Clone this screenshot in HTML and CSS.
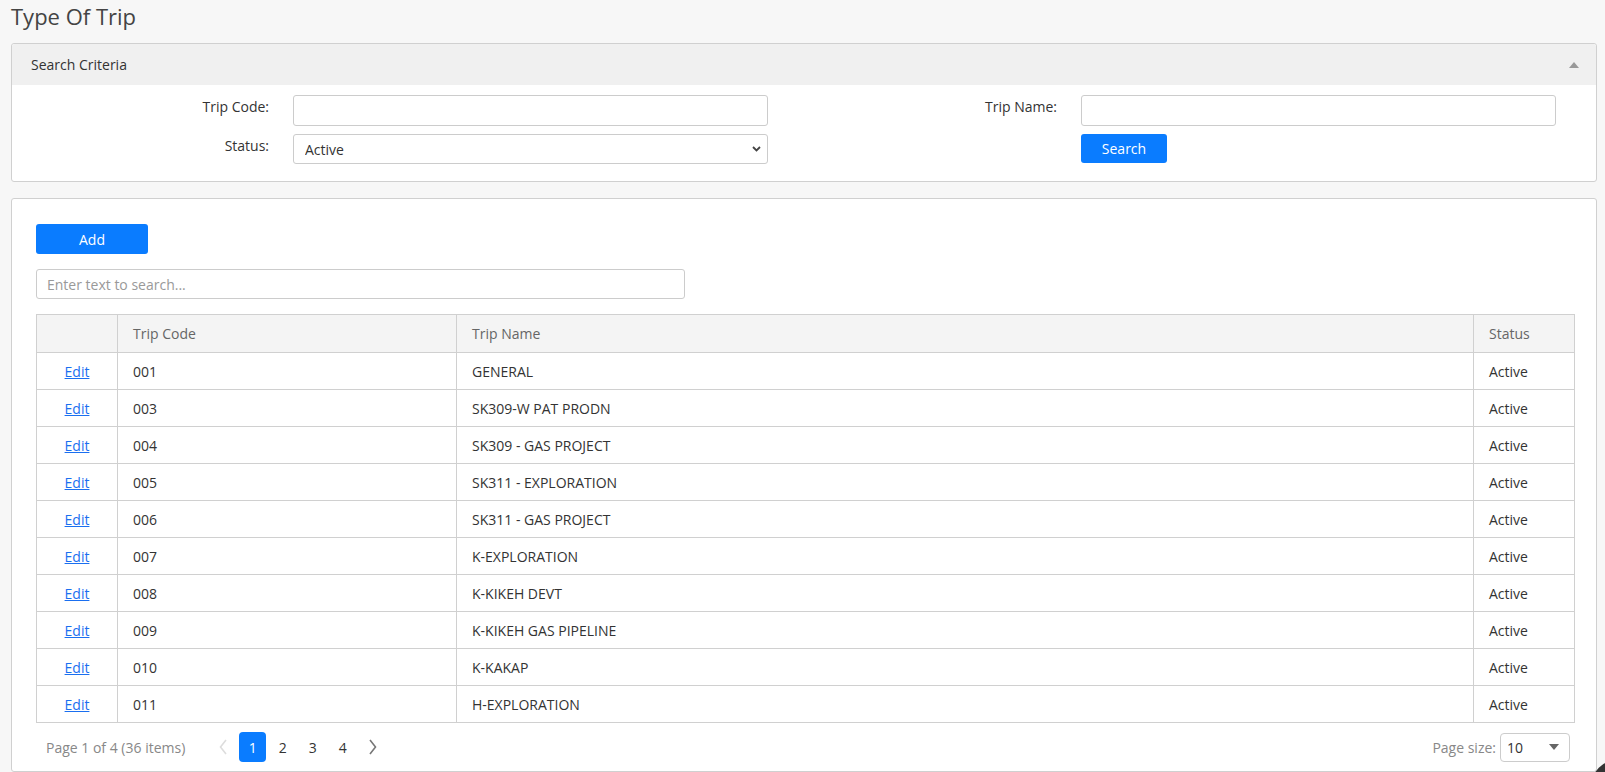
FILE: index.html
```html
<!DOCTYPE html>
<html lang="en">
<head>
<meta charset="utf-8">
<title>Type Of Trip</title>
<link rel="stylesheet" href="styles.css">
</head>
<body>
<h1 class="page-title">Type Of Trip</h1>

<section class="panel criteria">
  <div class="panel-header">
    <span>Search Criteria</span>
    <svg class="collapse-icon" width="10" height="6" viewBox="0 0 10 6"><polygon points="0,6 5,0 10,6" fill="#999"/></svg>
  </div>
  <div class="criteria-body">
    <label class="field-label">Trip Code:</label>
    <input class="text-input" type="text">
    <label class="field-label">Trip Name:</label>
    <input class="text-input" type="text">
    <label class="field-label">Status:</label>
    <div class="select-wrap">
      <select class="select-input"><option>Active</option></select>
      <svg class="select-chevron" width="9" height="6" viewBox="0 0 9 6"><polyline points="1,1 4.5,4.5 8,1" fill="none" stroke="#444" stroke-width="1.8"/></svg>
    </div>
    <span></span>
    <div><button class="btn btn-search" type="button">Search</button></div>
  </div>
</section>

<section class="panel grid-panel">
  <button class="btn btn-add" type="button">Add</button>
  <input class="text-input grid-search" type="text" placeholder="Enter text to search...">
  <table class="grid">
    <colgroup>
      <col class="col-cmd"><col class="col-code"><col class="col-name"><col class="col-status">
    </colgroup>
    <thead>
      <tr><th></th><th>Trip Code</th><th>Trip Name</th><th>Status</th></tr>
    </thead>
    <tbody>
      <tr><td class="cmd"><a href="#">Edit</a></td><td>001</td><td>GENERAL</td><td>Active</td></tr>
      <tr><td class="cmd"><a href="#">Edit</a></td><td>003</td><td>SK309-W PAT PRODN</td><td>Active</td></tr>
      <tr><td class="cmd"><a href="#">Edit</a></td><td>004</td><td>SK309 - GAS PROJECT</td><td>Active</td></tr>
      <tr><td class="cmd"><a href="#">Edit</a></td><td>005</td><td>SK311 - EXPLORATION</td><td>Active</td></tr>
      <tr><td class="cmd"><a href="#">Edit</a></td><td>006</td><td>SK311 - GAS PROJECT</td><td>Active</td></tr>
      <tr><td class="cmd"><a href="#">Edit</a></td><td>007</td><td>K-EXPLORATION</td><td>Active</td></tr>
      <tr><td class="cmd"><a href="#">Edit</a></td><td>008</td><td>K-KIKEH DEVT</td><td>Active</td></tr>
      <tr><td class="cmd"><a href="#">Edit</a></td><td>009</td><td>K-KIKEH GAS PIPELINE</td><td>Active</td></tr>
      <tr><td class="cmd"><a href="#">Edit</a></td><td>010</td><td>K-KAKAP</td><td>Active</td></tr>
      <tr><td class="cmd"><a href="#">Edit</a></td><td>011</td><td>H-EXPLORATION</td><td>Active</td></tr>
    </tbody>
  </table>
  <div class="pager">
    <span class="pager-summary">Page 1 of 4 (36 items)</span>
    <nav class="pager-nav">
      <span class="pg-arrow disabled"><svg width="8" height="16" viewBox="0 0 8 16"><polyline points="7,1 1.5,8 7,15" fill="none" stroke="#ddd" stroke-width="1.6"/></svg></span>
      <span class="pg-num active">1</span>
      <span class="pg-num">2</span>
      <span class="pg-num">3</span>
      <span class="pg-num">4</span>
      <span class="pg-arrow"><svg width="8" height="16" viewBox="0 0 8 16"><polyline points="1,1 6.5,8 1,15" fill="none" stroke="#777" stroke-width="1.6"/></svg></span>
    </nav>
    <span class="pager-spacer"></span>
    <span class="page-size-label">Page size:</span>
    <div class="page-size">
      <span>10</span>
      <svg width="10" height="6" viewBox="0 0 10 6"><polygon points="0,0 10,0 5,6" fill="#666"/></svg>
    </div>
  </div>
</section>

<div class="float-btn"></div>
</body>
</html>
```

FILE: styles.css
```css
html, body {
  margin: 0;
  padding: 0;
}
body {
  background: #f7f7f7;
  font-family: "Open Sans", "Noto Sans", sans-serif;
  font-size: 14px;
  color: #333;
  padding: 0 8px 0 11px;
  overflow: hidden;
  height: 772px;
  box-sizing: border-box;
}
.page-title {
  margin: 0 0 11px 0;
  font-size: 22px;
  font-weight: 400;
  line-height: 32px;
  color: #444;
}
.panel {
  background: #fff;
  border: 1px solid #d0d0d0;
  border-radius: 3px;
}
.panel-header {
  height: 41px;
  background: #f0f0f0;
  display: flex;
  align-items: center;
  justify-content: space-between;
  padding: 0 17px 0 19px;
  border-radius: 3px 3px 0 0;
  color: #333;
}
.collapse-icon {
  display: block;
}
.criteria-body {
  display: grid;
  grid-template-columns: 257px 475px 265px 475px;
  column-gap: 24px;
  row-gap: 8px;
  padding: 10px 0 17px 0;
}
.field-label {
  text-align: right;
  line-height: 20px;
  padding-top: 2px;
  color: #333;
}
.text-input {
  box-sizing: border-box;
  height: 31px;
  border: 1px solid #ccc;
  border-radius: 3px;
  background: #fff;
  font: inherit;
  padding: 0 10px;
  outline: none;
}
.select-wrap {
  position: relative;
}
.select-input {
  appearance: none;
  -webkit-appearance: none;
  box-sizing: border-box;
  width: 100%;
  height: 30px;
  border: 1px solid #ccc;
  border-radius: 3px;
  background: #fff;
  font: inherit;
  color: #333;
  padding: 0 11px;
}
.select-chevron {
  position: absolute;
  right: 7px;
  top: 12px;
}
.btn {
  border: 0;
  border-radius: 3px;
  background: #0a7cff;
  color: #fff;
  font: inherit;
  cursor: pointer;
}
.btn-search {
  width: 86px;
  height: 29px;
}
.grid-panel {
  margin-top: 16px;
  padding: 25px 22px 0 24px;
  height: 574px;
  box-sizing: border-box;
  display: flex;
  flex-direction: column;
  align-items: flex-start;
}
.btn-add {
  width: 112px;
  height: 30px;
  flex: none;
}
.grid-search {
  margin-top: 15px;
  width: 649px;
  height: 30px;
  color: #333;
  flex: none;
}
.grid-search::placeholder {
  color: #999;
}
.grid {
  margin-top: 15px;
  width: 1539px;
  border-collapse: collapse;
  border: 1px solid #d0d0d0;
  table-layout: fixed;
  flex: none;
}
.col-cmd { width: 81px; }
.col-code { width: 339px; }
.col-status { width: 101px; }
.grid th, .grid td {
  border: 1px solid #d0d0d0;
  padding: 0 15px;
  text-align: left;
  font-weight: 400;
  white-space: nowrap;
}
.grid th {
  height: 37px;
  background: #f4f4f4;
  color: #666;
}
.grid td {
  height: 36px;
  color: #333;
}
.grid td.cmd {
  text-align: center;
  padding: 0;
}
.grid td.cmd a {
  color: #1a6ff0;
  text-decoration: underline;
}
.pager {
  display: flex;
  align-items: center;
  width: 1538px;
  padding-top: 9px;
  box-sizing: border-box;
  padding-left: 10px;
  padding-right: 4px;
  flex: none;
}
.pager-summary {
  color: #888;
}
.pager-nav {
  display: flex;
  align-items: center;
  gap: 3px;
  margin-left: 24px;
}
.pg-num, .pg-arrow {
  width: 27px;
  height: 30px;
  display: flex;
  align-items: center;
  justify-content: center;
  color: #333;
  border-radius: 4px;
}
.pg-num.active {
  background: #0a7cff;
  color: #fff;
}
.pager-spacer {
  flex: 1;
}
.page-size-label {
  color: #888;
  margin-right: 4px;
}
.page-size {
  box-sizing: border-box;
  width: 70px;
  height: 29px;
  border: 1px solid #ccc;
  border-radius: 4px;
  display: flex;
  align-items: center;
  justify-content: space-between;
  padding: 0 10px 0 6px;
  color: #333;
}
.float-btn {
  position: fixed;
  left: 1590px;
  top: 759px;
  width: 60px;
  height: 60px;
  border-radius: 50%;
  background: #333;
}
```
